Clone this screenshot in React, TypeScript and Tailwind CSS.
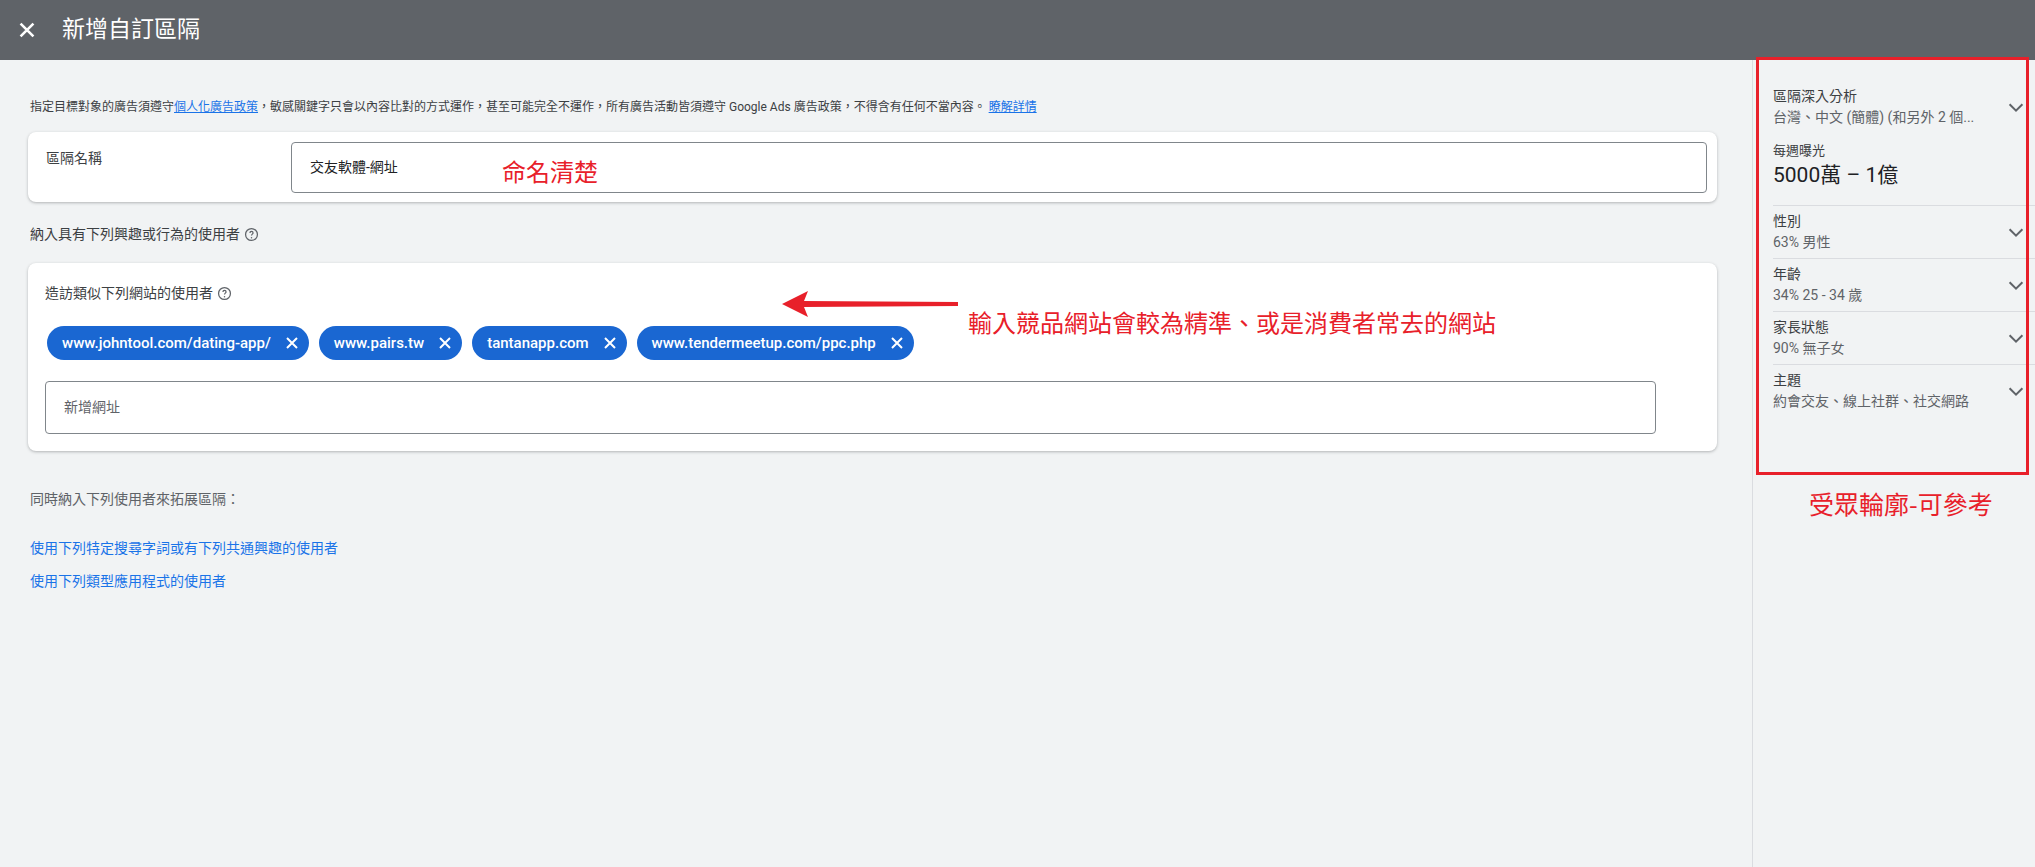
import React from "react";

const F = { fontFamily: 'Roboto, "Noto Sans CJK TC", sans-serif' };

const Chev = () => (
  <svg width="22" height="22" viewBox="0 0 24 24" className="text-[#5f6368]"><path d="M5 9l7 7 7-7" fill="none" stroke="currentColor" strokeWidth="2.2" /></svg>
);
const Help = () => (
  <svg width="15" height="15" viewBox="0 0 24 24" className="inline-block ml-1 text-[#5f6368]"><circle cx="12" cy="12" r="9.5" fill="none" stroke="currentColor" strokeWidth="2" /><path d="M9.5 9.5a2.5 2.5 0 115 0c0 1.8-2.5 2-2.5 4" fill="none" stroke="currentColor" strokeWidth="2" /><circle cx="12" cy="17" r="1.2" fill="currentColor" /></svg>
);

const Chip = ({ t }: { t: string }) => (
  <div className="flex items-center h-[34px] rounded-full bg-[#1a67d2] text-white text-[15px] font-medium pl-[15px] pr-[10px] gap-[14px]">
    {t}
    <svg width="14" height="14" viewBox="0 0 14 14"><path d="M2 2l10 10M12 2L2 12" stroke="white" strokeWidth="2" /></svg>
  </div>
);

const Row = ({ a, b, first }: { a: string; b: string; first?: boolean }) => (
  <div className={`flex items-center justify-between pr-[8px] ${first ? "" : "border-t border-[#dadce0]"} h-[53px]`}>
    <div>
      <div className="text-[14px] text-[#3c4043] leading-[21px]">{a}</div>
      <div className="text-[14px] text-[#5f6368] leading-[21px]">{b}</div>
    </div>
    <Chev />
  </div>
);

export default function App() {
  return (
    <div className="w-[2035px] h-[867px] bg-[#f1f3f4] flex flex-col overflow-hidden relative" style={F}>
      <div className="h-[60px] bg-[#5f6368] flex items-center px-[18px] gap-[26px] shrink-0">
        <svg width="18" height="18" viewBox="0 0 14 14"><path d="M2 2l10 10M12 2L2 12" stroke="white" strokeWidth="2" /></svg>
        <div className="text-white text-[23px]">新增自訂區隔</div>
      </div>
      <div className="flex flex-1">
        <div className="w-[1752px] px-[28px] pr-[35px] pt-[38px] relative">
          <div className="text-[12px] text-[#3c4043] px-[2px]">
            指定目標對象的廣告須遵守<span className="text-[#1a73e8] underline">個人化廣告政策</span>，敏感關鍵字只會以內容比對的方式運作，甚至可能完全不運作，所有廣告活動皆須遵守 Google Ads 廣告政策，不得含有任何不當內容。 <span className="text-[#1a73e8] underline">瞭解詳情</span>
          </div>
          <div className="mt-[16px] bg-white rounded-[8px] shadow-[0_1px_3px_rgba(60,64,67,0.35)] flex h-[70px] items-center pl-[18px] pr-[10px]">
            <div className="w-[245px] self-start pt-[16px] text-[14px] text-[#3c4043]">區隔名稱</div>
            <div className="flex-1 h-[51px] border border-[#80868b] rounded-[4px] flex items-center px-[18px] text-[14px] text-[#202124]">交友軟體-網址</div>
          </div>
          <div className="mt-[22px] text-[14px] text-[#3c4043] flex items-center px-[2px]">納入具有下列興趣或行為的使用者<Help /></div>
          <div className="mt-[18px] bg-white rounded-[8px] shadow-[0_1px_3px_rgba(60,64,67,0.35)] px-[17px] pt-[20px] pb-[17px]">
            <div className="text-[14px] text-[#3c4043] flex items-center">造訪類似下列網站的使用者<Help /></div>
            <div className="flex gap-[10px] mt-[22px] ml-[2px]">
              <Chip t="www.johntool.com/dating-app/" />
              <Chip t="www.pairs.tw" />
              <Chip t="tantanapp.com" />
              <Chip t="www.tendermeetup.com/ppc.php" />
            </div>
            <div className="mt-[21px] w-[1611px] h-[53px] border border-[#80868b] rounded-[4px] flex items-center px-[18px] text-[14px] text-[#5f6368]">新增網址</div>
          </div>
          <div className="mt-[38px] text-[14px] text-[#5f6368] px-[2px]">同時納入下列使用者來拓展區隔：</div>
          <div className="mt-[28px] text-[14px] text-[#1a73e8] px-[2px]">使用下列特定搜尋字詞或有下列共通興趣的使用者</div>
          <div className="mt-[12px] text-[14px] text-[#1a73e8] px-[2px]">使用下列類型應用程式的使用者</div>

          <div className="absolute left-[502px] top-[93px] text-[24px] text-[#e8202a]" style={{ fontFamily: '"Noto Sans CJK TC", sans-serif' }}>命名清楚</div>
          <svg className="absolute left-[782px] top-[231px]" width="180" height="26" viewBox="0 0 180 26">
            <path d="M0 13 L26 0 L22 10 L176 11 L176 15 L22 16 L26 26 Z" fill="#e8202a" />
          </svg>
          <div className="absolute left-[968px] top-[244px] text-[24px] text-[#e8202a]" style={{ fontFamily: '"Noto Sans CJK TC", sans-serif' }}>輸入競品網站會較為精準、或是消費者常去的網站</div>
        </div>
        <div className="flex-1 border-l border-[#dadce0] relative pl-[20px] pt-[20px]">
          <div className="absolute left-[3px] top-[-3px] w-[273px] h-[418px] border-[3px] border-[#e8202a]" />
          <Row first a="區隔深入分析" b="台灣、中文 (簡體) (和另外 2 個..." />
          <div className="pt-[8px] pb-[16px]">
            <div className="text-[13px] text-[#3c4043]">每週曝光</div>
            <div className="text-[21px] text-[#202124] leading-[28px]">5000萬 – 1億</div>
          </div>
          <Row a="性別" b="63% 男性" />
          <Row a="年齡" b="34% 25 - 34 歲" />
          <Row a="家長狀態" b="90% 無子女" />
          <Row a="主題" b="約會交友、線上社群、社交網路" />
          <div className="absolute left-[56px] top-[425px] text-[25px] text-[#e8202a]" style={{ fontFamily: '"Noto Sans CJK TC", sans-serif' }}>受眾輪廓-可參考</div>
        </div>
      </div>
    </div>
  );
}
